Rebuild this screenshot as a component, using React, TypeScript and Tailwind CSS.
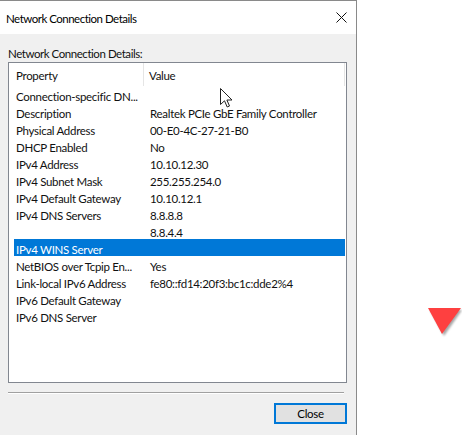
import React from "react";

const rows: [string, string][] = [
  ["Connection-specific DN...", ""],
  ["Description", "Realtek PCIe GbE Family Controller"],
  ["Physical Address", "00-E0-4C-27-21-B0"],
  ["DHCP Enabled", "No"],
  ["IPv4 Address", "10.10.12.30"],
  ["IPv4 Subnet Mask", "255.255.254.0"],
  ["IPv4 Default Gateway", "10.10.12.1"],
  ["IPv4 DNS Servers", "8.8.8.8"],
  ["", "8.8.4.4"],
  ["IPv4 WINS Server", ""],
  ["NetBIOS over Tcpip En...", "Yes"],
  ["Link-local IPv6 Address", "fe80::fd14:20f3:bc1c:dde2%4"],
  ["IPv6 Default Gateway", ""],
  ["IPv6 DNS Server", ""],
];

const SELECTED = 9;

export default function App() {
  return (
    <div
      className="relative w-[462px] h-[435px] bg-white flex overflow-hidden text-[11.5px] tracking-[-0.3px] text-[#111]"
      style={{ fontFamily: 'Lato, "Liberation Sans", Arial, sans-serif' }}
    >
      {/* Dialog window */}
      <div className="w-[357px] h-full flex flex-col bg-[#f0f0f0] border-r border-t border-[#8a8a8a] shrink-0">
        {/* Title bar */}
        <div className="h-[33px] bg-white flex items-center justify-between pl-[6px] pr-[9px] shrink-0">
          <span className="text-[11.5px] tracking-[-0.5px] text-black pt-[3px]">Network Connection Details</span>
          <svg width="11" height="11" viewBox="0 0 11 11" stroke="#111" strokeWidth="1" fill="none">
            <line x1="0.5" y1="0.5" x2="10.5" y2="10.5" />
            <line x1="10.5" y1="0.5" x2="0.5" y2="10.5" />
          </svg>
        </div>

        {/* Body */}
        <div className="flex-1 flex flex-col px-[8px]">
          <div className="h-[28px] flex items-center pt-[11px] tracking-[-0.45px]">Network Connection Details:</div>

          {/* List view */}
          <div className="h-[321px] w-[339px] border border-[#828790] bg-white flex flex-col">
            <div className="h-[23px] flex shrink-0">
              <div className="w-[135px] pl-[7px] pt-[3px] flex items-center border-r border-[#e5e5e5]">Property</div>
              <div className="flex-1 pl-[5px] pt-[3px] flex items-center border-r border-[#e5e5e5] mr-[1px]">Value</div>
            </div>
            <div className="flex flex-col">
              {rows.map(([k, v], i) => (
                <div
                  key={i}
                  className={`h-[17px] ml-[5px] mr-[1px] flex items-center ${
                    i === SELECTED ? "bg-[#0078d7] text-white" : ""
                  }`}
                >
                  <div className="w-[136px] pl-[2px] pt-[4px] whitespace-nowrap overflow-hidden">{k}</div>
                  <div className="flex-1 pt-[4px] whitespace-nowrap">{v}</div>
                </div>
              ))}
            </div>
          </div>

          {/* Etched separator */}
          <div className="mt-[9px] w-[336px] border-t border-[#a0a0a0] border-b border-b-white" />

          <div className="flex justify-end mt-[9px] pr-[1px]">
            <button className="w-[73px] h-[21px] bg-[#e1e1e1] border-2 border-[#0078d7] flex items-center justify-center text-black pt-[1px]">
              Close
            </button>
          </div>
        </div>
      </div>

      {/* Mouse cursor */}
      <svg
        className="absolute left-[220px] top-[88px]"
        width="13"
        height="20"
        viewBox="0 0 13 20"
      >
        <path
          d="M0.5 0.5 L0.5 16.5 L4.5 12.8 L7.2 19 L9.5 18 L6.9 12 L12 12 Z"
          fill="white"
          stroke="#222"
          strokeWidth="1"
          strokeLinejoin="miter"
        />
      </svg>

      {/* Red triangle marker */}
      <svg className="absolute left-[426px] top-[306px]" width="36" height="32" viewBox="0 0 36 32">
        <defs>
          <filter id="sh" x="-20%" y="-20%" width="150%" height="150%">
            <feGaussianBlur stdDeviation="1.2" />
          </filter>
        </defs>
        <polygon points="4,4 36,4 18,30" fill="#000" opacity="0.35" filter="url(#sh)" />
        <polygon points="2,2 35,2 16,28" fill="#fe4040" />
      </svg>
    </div>
  );
}
